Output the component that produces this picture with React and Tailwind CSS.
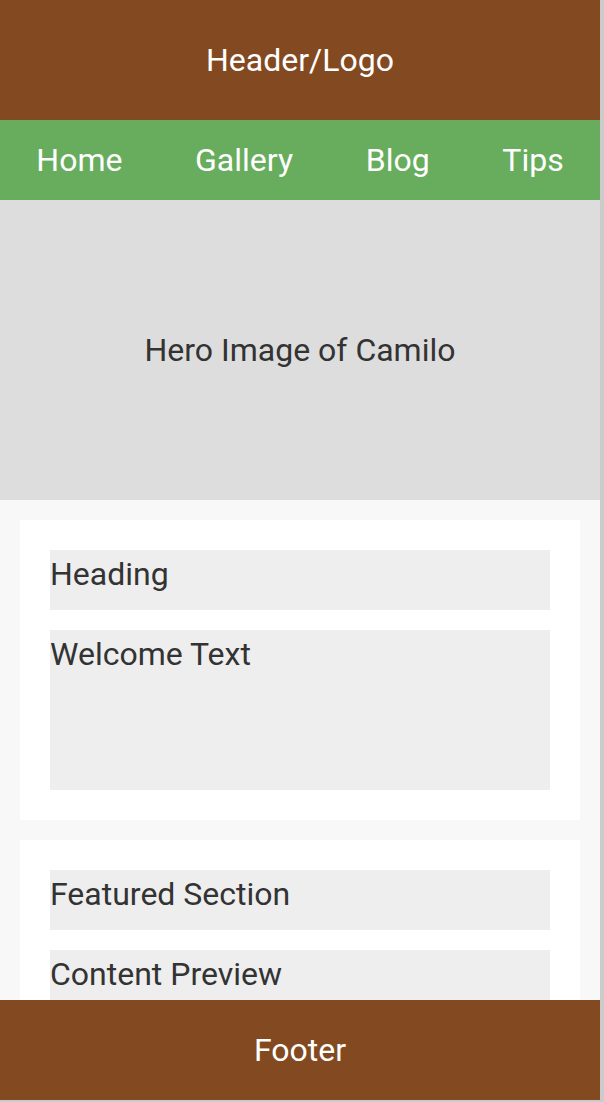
const Box = ({ children, tall }) => (
  <div className={`bg-[#eeeeee] text-[#333333] ${tall ? 'h-[160px]' : 'h-[60px]'}`}>
    {children}
  </div>
);

const App = () => {
  const links = ['Home', 'Gallery', 'Blog', 'Tips'];
  return (
    <div className="h-screen overflow-hidden bg-[#cbcbcb] text-[32px] leading-[1.5]" style={{ fontFamily: 'Roboto, "Liberation Sans", sans-serif' }}>
      <div className="relative w-[600px] h-[1100px] overflow-hidden bg-[#f8f8f8] flex flex-col">
        <header className="h-[120px] shrink-0 bg-[#834a22] text-white flex items-center justify-center">
          Header/Logo
        </header>
        <nav className="h-[80px] shrink-0 bg-[#67ad5d] text-white flex items-center justify-around">
          {links.map((l) => (
            <span key={l}>{l}</span>
          ))}
        </nav>
        <div className="h-[300px] shrink-0 bg-[#dddddd] text-[#333333] flex items-center justify-center">
          Hero Image of Camilo
        </div>
        <main className="p-[20px] flex flex-col gap-[20px]">
          <section className="bg-white p-[30px] flex flex-col gap-[20px]">
            <Box>Heading</Box>
            <Box tall>Welcome Text</Box>
          </section>
          <section className="bg-white p-[30px] flex flex-col gap-[20px]">
            <Box>Featured Section</Box>
            <Box tall>Content Preview</Box>
          </section>
        </main>
        <footer className="absolute left-0 bottom-0 w-full h-[100px] bg-[#834a22] text-white flex items-center justify-center">
          Footer
        </footer>
      </div>
    </div>
  );
};

export default App;
